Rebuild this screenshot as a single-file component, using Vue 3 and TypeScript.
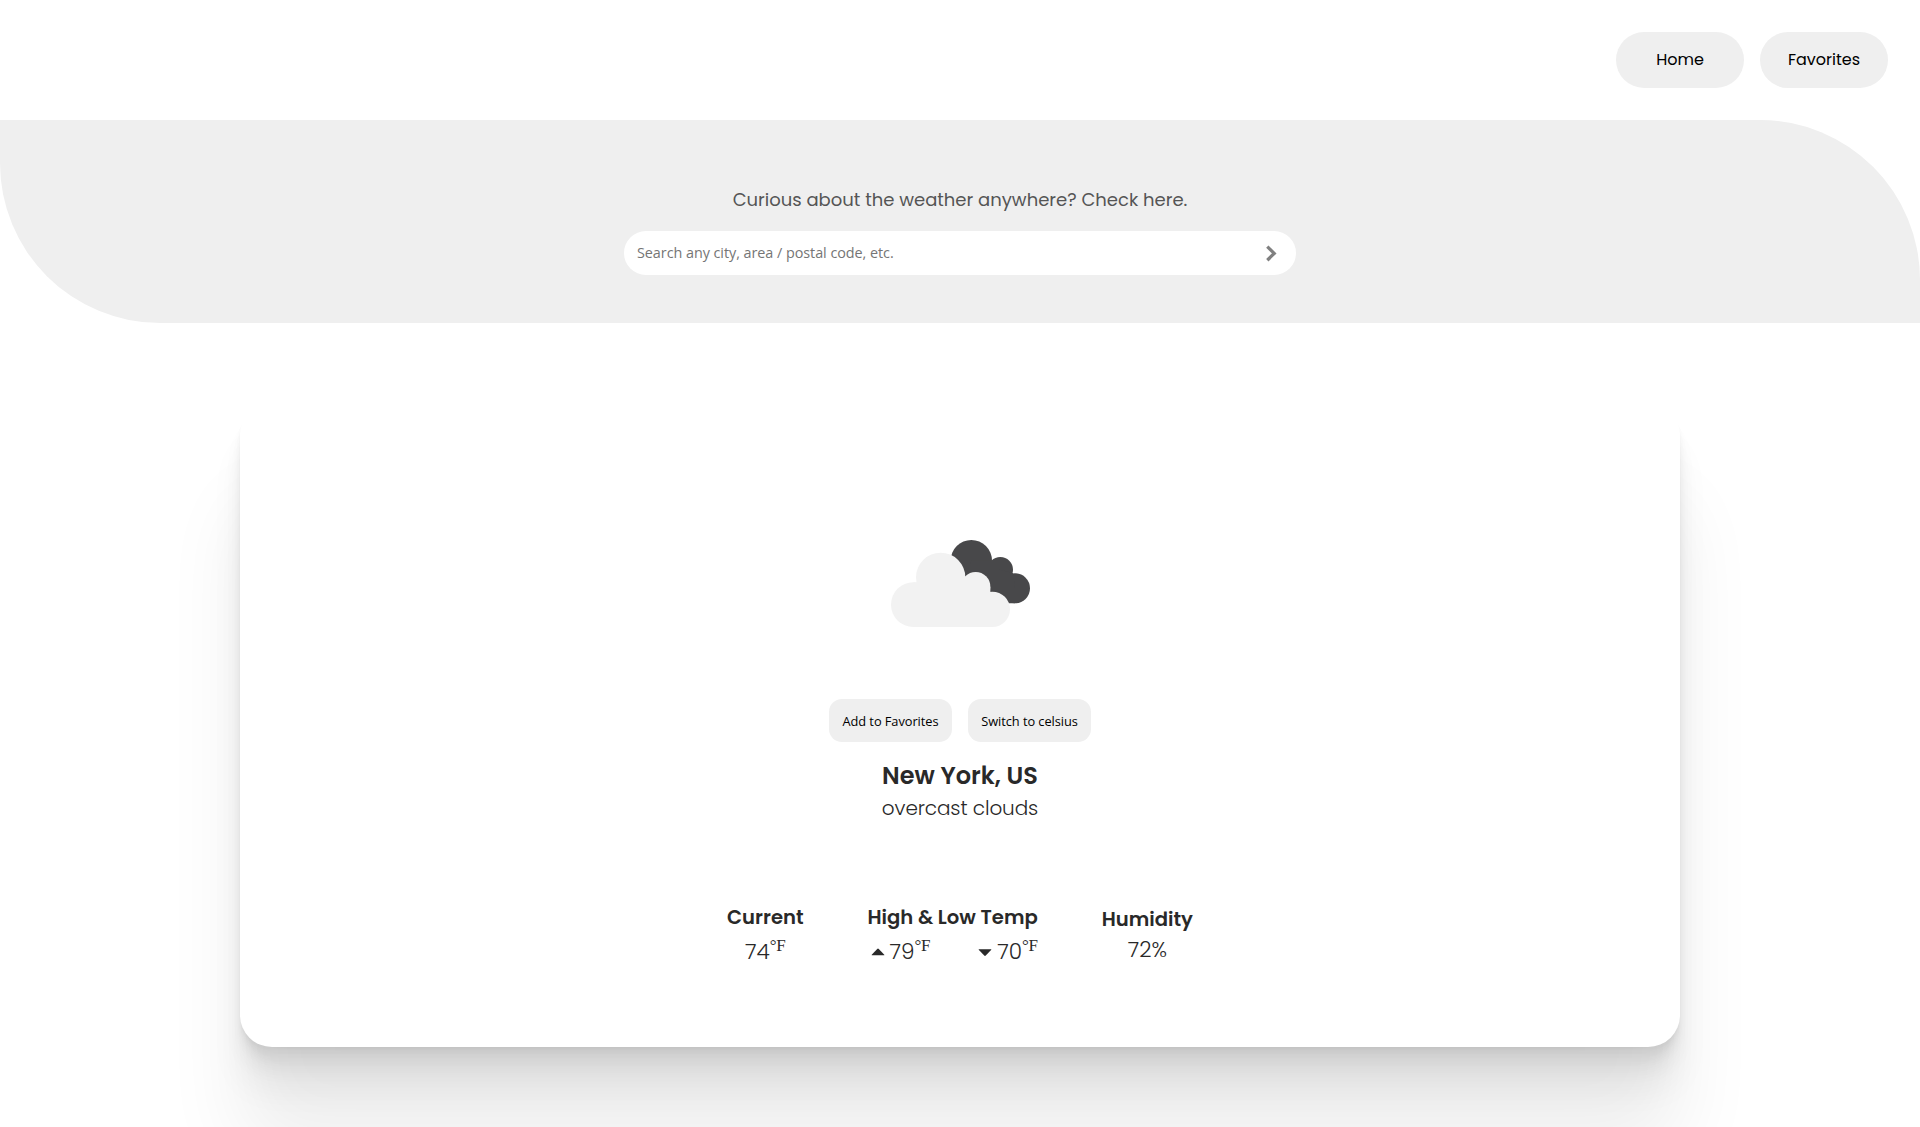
<script setup lang="ts">
import { ref } from 'vue'

interface Reading {
  value: number
  trend: 'up' | 'down'
}

const query = ref('')
const links: string[] = ['Home', 'Favorites']
const actions: string[] = ['Add to Favorites', 'Switch to celsius']
const range: Reading[] = [
  { value: 79, trend: 'up' },
  { value: 70, trend: 'down' },
]
const carets: Record<Reading['trend'], string> = {
  up: 'M1.7 10.8 7.2 4.9Q8 4.1 8.8 4.9L14.3 10.8Q14.5 11.3 13.9 11.3H2.1Q1.5 11.3 1.7 10.8Z',
  down: 'M1.7 5.7 7.2 11.6Q8 12.4 8.8 11.6L14.3 5.7Q14.5 5.2 13.9 5.2H2.1Q1.5 5.2 1.7 5.7Z',
}
</script>

<template>
  <div class="page">
    <nav class="nav">
      <button v-for="link in links" :key="link" class="nav-btn">{{ link }}</button>
    </nav>

    <header class="hero">
      <p class="prompt">Curious about the weather anywhere? Check here.</p>
      <form class="search" @submit.prevent>
        <input v-model="query" type="text" placeholder="Search any city, area / postal code, etc." />
        <button class="go" aria-label="Search">
          <svg width="16" height="20" viewBox="0 0 16 20">
            <path d="M3.3 3.6 10.2 10.4 3.3 17.2" fill="none" stroke="#808080" stroke-width="3.3" />
          </svg>
        </button>
      </form>
    </header>

    <main class="card">
      <svg class="clouds" width="180" height="120" viewBox="0 0 540 360">
        <g fill="#48484a">
          <circle cx="304" cy="122" r="62" />
          <circle cx="391" cy="149" r="38" />
          <circle cx="435" cy="205" r="45" />
          <path d="M304 122H366L391 149 429 160 435 205V250H330L290 160Z" />
        </g>
        <g fill="#f2f2f2">
          <circle cx="130" cy="254" r="67" />
          <circle cx="212" cy="172" r="74" />
          <circle cx="317" cy="200" r="44" />
          <circle cx="367" cy="268" r="53" />
          <path d="M130 187H139L212 172H286L317 200H361V216L367 268V321H130Z" />
        </g>
      </svg>

      <div class="actions">
        <button v-for="action in actions" :key="action" class="action">{{ action }}</button>
      </div>

      <h2 class="city">New York, US</h2>
      <p class="sky">overcast clouds</p>

      <section class="stats">
        <div class="stat">
          <h3>Current</h3>
          <p class="temp">74<span class="unit">°F</span></p>
        </div>
        <div class="stat">
          <h3>High &amp; Low Temp</h3>
          <div class="range">
            <p v-for="r in range" :key="r.trend" class="temp">
              <svg width="16" height="16" viewBox="0 0 16 16"><path :d="carets[r.trend]" fill="#292929" /></svg>
              <span>{{ r.value }}<span class="unit">°F</span></span>
            </p>
          </div>
        </div>
        <div class="stat humidity">
          <h3>Humidity</h3>
          <p class="percent">72%</p>
        </div>
      </section>
    </main>
  </div>
</template>

<style>
body {
  margin: 0;
  background: #fff;
}
</style>

<style scoped>
.page {
  height: 100vh;
  overflow: hidden;
  color: #292929;
  font-family: Poppins, Inter, sans-serif;
}
h2, h3, p {
  margin: 0;
}
button, input {
  border: 0;
  padding: 0;
  font: inherit;
}
.nav {
  display: flex;
  justify-content: flex-end;
  gap: 16px;
  padding: 32px;
}
.nav-btn {
  width: 128px;
  height: 56px;
  padding-bottom: 2px;
  border-radius: 28px;
  background: #efefef;
  color: #000;
  font-size: 16px;
}
.hero {
  box-sizing: border-box;
  height: 203px;
  display: flex;
  flex-direction: column;
  align-items: center;
  padding-top: 64px;
  background: #efefef;
  border-radius: 0 160px;
}
.prompt {
  color: #555;
  font-size: 18px;
  line-height: 31px;
}
.search {
  box-sizing: border-box;
  width: 672px;
  height: 44px;
  margin-top: 16px;
  padding: 0 16px 0 13px;
  display: flex;
  align-items: center;
  background: #fff;
  border-radius: 22px;
}
.search input {
  flex: 1;
  padding-bottom: 2px;
  outline: none;
  background: none;
  font-family: 'Segoe UI', 'Open Sans', sans-serif;
  font-size: 14.4px;
  letter-spacing: -0.05px;
}
.search input::placeholder {
  color: #757575;
}
.go {
  display: flex;
  background: none;
}
.card {
  box-sizing: border-box;
  width: 1440px;
  height: 644px;
  margin: 80px auto 0;
  padding-top: 117px;
  display: flex;
  flex-direction: column;
  align-items: center;
  background: #fff;
  border-radius: 32px;
  box-shadow:
    0 2.8px 2.2px rgba(0, 0, 0, 0.02),
    0 6.7px 5.3px rgba(0, 0, 0, 0.028),
    0 12.5px 10px rgba(0, 0, 0, 0.035),
    0 22.3px 17.9px rgba(0, 0, 0, 0.042),
    0 41.8px 33.4px rgba(0, 0, 0, 0.05),
    0 100px 80px rgba(0, 0, 0, 0.07);
}
.actions {
  display: flex;
  gap: 16px;
  margin-top: 59px;
}
.action {
  width: 123px;
  height: 43px;
  border-radius: 13px;
  background: #efefef;
  color: #000;
  font-family: 'Segoe UI', 'Open Sans', sans-serif;
  font-size: 12.8px;
  letter-spacing: -0.05px;
}
.city {
  margin-top: 18px;
  font-size: 24px;
  font-weight: 600;
  line-height: 32px;
}
.sky {
  font-size: 20px;
  font-weight: 300;
  line-height: 33px;
  letter-spacing: -0.12px;
}
.stats {
  display: flex;
  align-items: flex-start;
  gap: 64px;
  margin-top: 77px;
}
.stat {
  display: flex;
  flex-direction: column;
  align-items: center;
}
h3 {
  font-size: 19.6px;
  font-weight: 600;
  line-height: 30px;
}
.range {
  align-self: stretch;
  display: flex;
  justify-content: space-between;
  padding-left: 2px;
}
.temp {
  display: flex;
  align-items: center;
  font-size: 21.6px;
  font-weight: 300;
  line-height: 40px;
}
.temp svg {
  margin-right: 4px;
}
.unit {
  font-family: 'Liberation Serif', serif;
  font-size: 17px;
  font-weight: 400;
  line-height: 0;
  letter-spacing: -0.3px;
  vertical-align: 8px;
}
.stat > .temp {
  display: block;
}
.humidity {
  padding-top: 2px;
}
.percent {
  font-size: 21.4px;
  font-weight: 300;
  line-height: 31px;
}
</style>
